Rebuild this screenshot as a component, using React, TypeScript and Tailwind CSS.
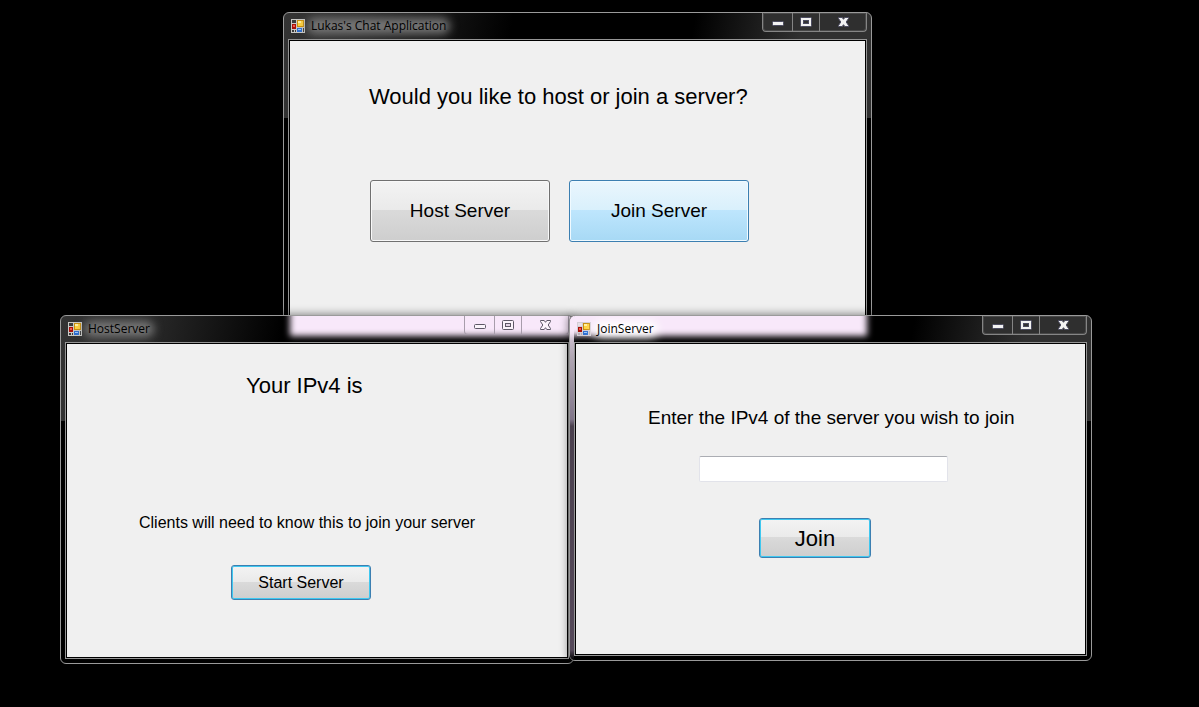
import type { ReactNode } from "react";

function FormIcon({ pale }: { pale?: boolean }) {
  const dark = pale ? "#b3acb6" : "#3c3c3c";
  return (
    <svg width="14" height="14" viewBox="0 0 14 14" shapeRendering="crispEdges" aria-hidden="true" className="relative shrink-0">
      <rect width="14" height="14" fill={pale ? "#d3cdd5" : "#c9c9c6"} />
      <rect x="1" y="1" width="4" height="3" fill={pale ? "#e6dfe9" : dark} />
      <rect x="1" y="5" width="4" height="5" fill="#a80f0a" />
      <rect x="2" y="6" width="2" height="2" fill="#f0594a" />
      <rect x="6" y="1" width="7" height="7" fill="#c98f0e" />
      <rect x="7" y="2" width="5" height="5" fill="#ffd23e" />
      <rect x="7" y="2" width="3" height="2" fill="#fff0a0" />
      <rect x="6" y="9" width="5" height="4" fill="#2f6fd0" />
      <rect x="7" y="10" width="3" height="1" fill="#9cc8ff" />
      <rect x="1" y="11" width="2" height="2" fill={dark} />
      <rect x="4" y="11" width="1" height="2" fill={dark} />
      <rect x="12" y="9" width="1" height="4" fill={dark} />
    </svg>
  );
}

function Caption({ light }: { light?: boolean }) {
  const fill = light ? "#fbf4fb" : "#f2f2f2";
  const stroke = light ? "#5d5866" : "#4b4b60";
  const hole = light ? "#e3d5e6" : "#333333";
  const box = light ? "border-[#a79dab]" : "border-[#858585]";
  const button = "flex justify-center pt-1";
  return (
    <div className={`relative flex h-[19px] w-[105px] shrink-0 rounded-b border border-t-0 ${box} ${light ? "" : "bg-[#2f2f2f] shadow-[inset_0_0_0_1px_#484848]"}`}>
      <button aria-label="Minimize" className={`${button} w-[29px]`}>
        <svg width="14" height="12" aria-hidden="true">
          <rect x="1.5" y="4.5" width="11" height="4" rx="1" fill={fill} stroke={stroke} />
        </svg>
      </button>
      <button aria-label="Maximize" className={`${button} w-7 border-x ${box}`}>
        <svg width="14" height="12" aria-hidden="true">
          <rect x="1.5" y="0.5" width="11" height="9" rx="1" fill={fill} stroke={stroke} />
          <rect x="4.5" y="3.5" width="5" height="3" fill={hole} stroke={stroke} />
        </svg>
      </button>
      <button aria-label="Close" className={`${button} flex-1`}>
        <svg width="13" height="11" aria-hidden="true">
          <path d="M1.5 .5h3.7l1.3 1.8L7.8 .5h3.7v1L9.2 5l2.3 3.5v1H7.8L6.5 7.7 5.2 9.5H1.5v-1L3.8 5 1.5 1.5z" fill={fill} stroke={stroke} />
        </svg>
      </button>
    </div>
  );
}

type WindowProps = {
  title: string;
  place: string;
  frame: string;
  halo: string;
  backdrop?: ReactNode;
  light?: boolean;
  paleIcon?: boolean;
  children: ReactNode;
};

function Window({ title, place, frame, halo, backdrop, light, paleIcon, children }: WindowProps) {
  return (
    <section
      className={`absolute flex flex-col overflow-hidden rounded-md border border-[#9a9a9a] bg-black bg-[length:100%_105px] bg-no-repeat px-1 pb-1 shadow-[0_0_8px_1px_rgba(0,0,0,0.45)] ${frame} ${place}`}
    >
      {backdrop}
      <header className="relative flex h-[26px] shrink-0 items-start justify-between pl-[3px]">
        <div className="flex items-center gap-[6px] pt-[6px]">
          <FormIcon pale={paleIcon} />
          <h2 className="relative font-['Open_Sans','Noto_Sans',sans-serif] text-[12px] leading-[14px] text-black">
            <span className={`absolute -inset-x-1 -inset-y-px rounded-full blur-[5px] ${halo}`} />
            <span className="relative">{title}</span>
          </h2>
        </div>
        <Caption light={light} />
      </header>
      <div className="relative flex grow flex-col border border-[#959595]">
        <div className="flex grow flex-col items-start border border-black bg-[#f0f0f0]">{children}</div>
      </div>
    </section>
  );
}

const grey = "bg-[linear-gradient(#f3f3f3,#eaeaea_48%,#dadada_48%,#cecece)]";
const focused = `rounded-[3px] border border-[#3c7fb1] shadow-[inset_0_0_0_1px_#3fc8f0] ${grey}`;

export default function App() {
  return (
    <main className="relative h-screen w-full overflow-hidden bg-black font-['Liberation_Sans',Arial,sans-serif] text-black">
      <Window
        title="Lukas's Chat Application"
        place="left-[283px] top-[12px] h-[400px] w-[589px]"
        frame="bg-[linear-gradient(100deg,#343434,#2c2c2c_12%,#000_38%,#000_68%,#303030_86%)]"
        halo="bg-[#777]"
      >
        <p className="ml-[79px] mt-[43px] text-[22px] leading-[26px]">Would you like to host or join a server?</p>
        <div className="ml-20 mt-[70px] flex gap-[19px] text-[19px]">
          <button className={`h-[62px] w-[180px] rounded-[3px] border border-[#707070] shadow-[inset_0_0_0_1px_#f8f8f8] ${grey}`}>Host Server</button>
          <button className="h-[62px] w-[180px] rounded-[3px] border border-[#3c7fb1] bg-[linear-gradient(#eaf6fd,#d9f0fc_48%,#bee6fd_48%,#a7d9f5)] shadow-[inset_0_0_0_1px_#f0faff]">Join Server</button>
        </div>
      </Window>

      <Window
        title="HostServer"
        place="left-[60px] top-[315px] h-[349px] w-[514px]"
        frame="bg-[linear-gradient(100deg,#343434,#2c2c2c_15%,#000_42%)]"
        halo="bg-[#777]"
        light
        backdrop={<div className="absolute -top-3 left-[229px] h-8 w-[320px] bg-[#f8e8fa] blur-[3px]" />}
      >
        <p className="ml-[179px] mt-[29px] text-[22px] leading-[26px]">Your IPv4 is</p>
        <p className="ml-[72px] mt-[114px] text-[16px] leading-5">Clients will need to know this to join your server</p>
        <button className={`ml-[164px] mt-8 h-[35px] w-[140px] text-[16px] ${focused}`}>Start Server</button>
      </Window>

      <Window
        title="JoinServer"
        place="left-[569px] top-[315px] h-[346px] w-[523px]"
        frame="bg-[linear-gradient(100deg,#000_64%,#303030_85%)]"
        halo="bg-white"
        paleIcon
        backdrop={
          <>
            <div className="absolute bottom-0 left-0 top-0 w-1 bg-[linear-gradient(#e8d8ea,#b0a6b3_12%,#81768a_30%,#4a404e_32%,#55495a_97%,#000)]" />
            <div className="absolute -left-4 -top-3 h-8 w-[313px] bg-[#f8e8fa] blur-[3px]" />
          </>
        }
      >
        <label htmlFor="address" className="ml-[72px] mt-[62px] text-[19px] leading-6">
          Enter the IPv4 of the server you wish to join
        </label>
        <input id="address" className="ml-[123px] mt-[26px] h-[26px] w-[249px] rounded-[2px] border border-[#e2e3ea] border-t-[#abadb3] bg-white px-1 text-[16px] outline-none" />
        <button className={`ml-[183px] mt-9 h-10 w-28 text-[22px] ${focused}`}>Join</button>
      </Window>
    </main>
  );
}
